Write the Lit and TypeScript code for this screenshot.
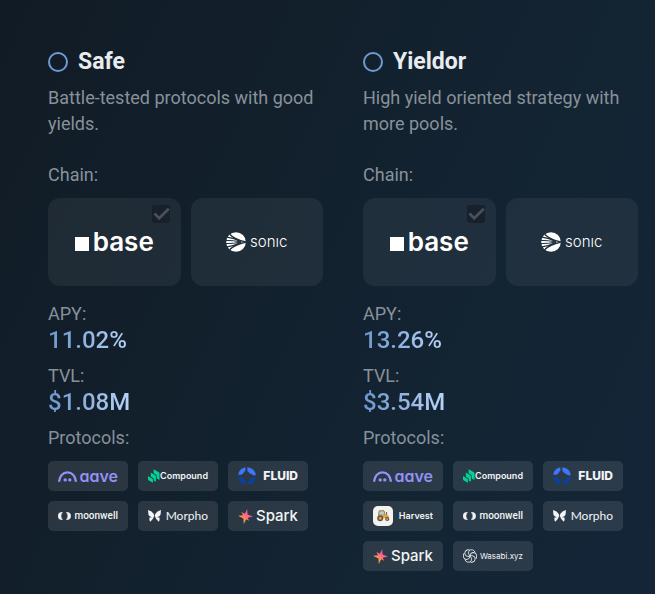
import { LitElement, html, css, svg } from "lit";
import { customElement, property } from "lit/decorators.js";

interface Strategy {
  id: string;
  name: string;
  description: string;
  apy: string;
  tvl: string;
  protocols: string[];
}

const STRATEGIES: Strategy[] = [
  {
    id: "safe",
    name: "Safe",
    description: "Battle-tested protocols with good yields.",
    apy: "11.02%",
    tvl: "$1.08M",
    protocols: ["aave", "compound", "fluid", "moonwell", "morpho", "spark"],
  },
  {
    id: "yieldor",
    name: "Yieldor",
    description: "High yield oriented strategy with more pools.",
    apy: "13.26%",
    tvl: "$3.54M",
    protocols: ["aave", "compound", "fluid", "harvest", "moonwell", "morpho", "spark", "wasabi"],
  },
];

const PROTOCOL_NAMES: Record<string, string> = {
  aave: "aave",
  compound: "Compound",
  fluid: "FLUID",
  harvest: "Harvest",
  moonwell: "moonwell",
  morpho: "Morpho",
  spark: "Spark",
  wasabi: "Wasabi.xyz",
};

const PETALS = [0, 60, 120, 180, 240, 300];

const icons: Record<string, unknown> = {
  aave: html`<svg width="19" height="11" viewBox="0 0 19 11" aria-hidden="true">
    <path d="M1.1 10.8C1.4 5.2 4.9 1.4 9.5 1.4S17.6 5.2 17.9 10.8" fill="none" stroke="#9391f7" stroke-width="2.3" />
    <circle cx="7.2" cy="8.9" r="1.7" fill="#9391f7" />
    <circle cx="11.8" cy="8.9" r="1.7" fill="#9391f7" />
  </svg>`,
  compound: html`<svg width="12" height="14" viewBox="0 0 12 14" aria-hidden="true">
    <g fill="#00d395">
      <path d="M0 7 4.4 9.7Q4.9 10 4.9 10.6V13.8L.5 11.2Q0 10.9 0 10.3Z" />
      <path d="M2.8 3.6 7.4 6.3Q7.9 6.6 7.9 7.2V12.8L5.6 11.4V9.9Q5.6 9.3 5.1 9L3.3 8Q2.8 7.7 2.8 7.1Z" />
      <path d="M5.6.2 10.9 3.2Q11.5 3.6 11.5 4.2V11L8.6 9.4V6.6Q8.6 6 8.1 5.7L6.1 4.5Q5.6 4.2 5.6 3.6Z" />
    </g>
  </svg>`,
  fluid: html`<svg width="18" height="18" viewBox="0 0 18 18" aria-hidden="true">
    <path d="M7.4.2V3.2Q6 6.2 3.4 7.8H.3A8.8 8.8 0 0 1 7.4.2Z" fill="#3f75ff" />
    <path d="M9.4.2A8.8 8.8 0 0 1 17.8 8.2H15.2Q11.4 6.8 9.4 4Z" fill="#3f75ff" />
    <path d="M.3 10H3.6Q6.2 11.6 7.4 14.4V17.8A8.8 8.8 0 0 1 .3 10Z" fill="#0b409c" />
    <path d="M17.8 10.4H15Q12 11.6 10.2 14.4V17.8A8.8 8.8 0 0 0 17.8 10.4Z" fill="#0b409c" />
  </svg>`,
  harvest: html`<svg width="20" height="20" viewBox="0 0 20 20" aria-hidden="true">
    <rect width="20" height="20" rx="5" fill="#f4f2ee" />
    <path d="M6.2 4.8h4.8l1.2 4.4H5.5Z" fill="#b9ced2" stroke="#8a6c44" stroke-width=".9" />
    <path d="M5.2 8.7h9.2q1.4.2 1.4 3.3H5.2Z" fill="#e3a23c" />
    <path d="M13.6 6v2.8" stroke="#6b5a44" />
    <circle cx="7.2" cy="12.2" r="3" fill="#5d554b" />
    <circle cx="7.2" cy="12.2" r="1.5" fill="#e3a23c" />
    <circle cx="14.2" cy="13" r="2.1" fill="#5d554b" />
    <circle cx="14.2" cy="13" r="1" fill="#e3a23c" />
  </svg>`,
  moonwell: html`<svg width="13" height="8" viewBox="0 0 13 8" aria-hidden="true">
    <path d="M4.4 0Q0 .4 0 4T4.4 8Q1.4 4 4.4 0Z" fill="#f2f4f5" stroke="#f2f4f5" stroke-width=".5" />
    <path d="M8.4 0Q12.8.4 12.8 4T8.4 8Q11.4 4 8.4 0Z" fill="#f2f4f5" stroke="#f2f4f5" stroke-width=".5" />
  </svg>`,
  morpho: html`<svg width="13" height="12" viewBox="0 0 13 12" aria-hidden="true">
    <g fill="#f2f4f5">
      <path d="M0 0Q4.2 1.2 5.6 3.7 6.3 4.8 6.2 6.6L4.4 7.2Q.4 6.6.3 3.4Z" />
      <path d="M13 0Q8.8 1.2 7.4 3.7 6.7 4.8 6.8 6.6L8.6 7.2Q12.6 6.6 12.7 3.4Z" />
      <path d="M6 6.6Q5 9.8 2.3 11.7.8 9.9 1.6 7.3 3.6 7.7 6 6.6Z" />
      <path d="M7 6.6Q8 9.8 10.7 11.7 12.2 9.9 11.4 7.3 9.4 7.7 7 6.6Z" />
    </g>
  </svg>`,
  spark: html`<svg width="15" height="15" viewBox="0 0 15 15" aria-hidden="true">
    <defs>
      <linearGradient id="spark-fill" x1="1" y1="0" x2="0" y2="1">
        <stop offset=".3" stop-color="#fa53a5" />
        <stop offset=".75" stop-color="#ffa237" />
      </linearGradient>
    </defs>
    <path
      d="M9.2 0 9.6 5.4 14.8 7.4 9.8 8.8 11 11.8 8.2 10.2 5.8 15 5.4 9.4 0 6.8 5 6.2 3.4 3 6.8 4.8Z"
      fill="url(#spark-fill)"
    />
  </svg>`,
  wasabi: html`<svg width="14" height="14" viewBox="0 0 14 14" aria-hidden="true">
    <g fill="none" stroke="#e3e7ea" stroke-width=".9">
      ${PETALS.map(
        (a) => svg`<path transform="rotate(${a} 7 7)" d="M7 7Q4.4 5 5.8 2.2 6.9.4 9.3.8 11.4 1.3 12.1 3.4" />`,
      )}
    </g>
  </svg>`,
};

const sonicIcon = html`<svg width="20" height="20" viewBox="0 0 20 20" aria-hidden="true">
  <defs>
    <mask id="sonic-cut">
      <circle cx="10" cy="10" r="9.8" fill="#fff" />
      <g fill="none" stroke="#000" stroke-width="1">
        <path d="M0 8.4Q8 8.4 14 9.8M0 11.6Q8 11.6 14 10.2" />
        <path d="M.8 5.2Q8 5.8 15 9.6M.8 14.8Q8 14.2 15 10.4" stroke-width="1.2" />
        <path d="M3.6 2.2Q8.5 7.4 20 10M3.6 17.8Q8.5 12.6 20 10" stroke-width="1.3" />
      </g>
    </mask>
  </defs>
  <rect width="20" height="20" fill="#fff" mask="url(#sonic-cut)" />
</svg>`;

@customElement("protocol-chip")
export class ProtocolChip extends LitElement {
  @property() protocol = "";

  static styles = css`
    :host {
      display: block;
    }
    .chip {
      box-sizing: border-box;
      width: 80px;
      height: 30px;
      padding: 0 10px;
      border-radius: 5px;
      background: rgba(255, 255, 255, 0.1);
      display: flex;
      align-items: center;
      justify-content: space-between;
      color: #f2f4f5;
      font-family: Inter, sans-serif;
      line-height: 20px;
      white-space: nowrap;
    }
    svg {
      display: block;
      flex: none;
    }
    .aave {
      color: #9391f7;
      font-size: 16px;
      font-weight: 600;
      font-feature-settings: "cv11";
    }
    .compound,
    .harvest {
      font-size: 9px;
      font-weight: 600;
    }
    .fluid {
      font-size: 12px;
      font-weight: 800;
    }
    .moonwell {
      font-family: Roboto, sans-serif;
      font-size: 10px;
      font-weight: 500;
    }
    .morpho {
      font-family: Lato, sans-serif;
      font-size: 12px;
    }
    .spark {
      font-size: 15px;
      font-weight: 500;
    }
    .wasabi {
      font-size: 8px;
    }
  `;

  render() {
    return html`<div class="chip">
      ${icons[this.protocol]}
      <span class=${this.protocol}>${PROTOCOL_NAMES[this.protocol]}</span>
    </div>`;
  }
}

@customElement("strategy-column")
export class StrategyColumn extends LitElement {
  @property({ attribute: false }) strategy!: Strategy;

  static styles = css`
    :host {
      display: block;
      min-width: 0;
    }
    svg {
      display: block;
      flex: none;
    }
    .title {
      display: flex;
      align-items: center;
      gap: 10px;
      height: 32px;
      margin-bottom: 7px;
      color: #e8ecef;
      font-size: 23px;
      font-weight: 700;
      line-height: 32px;
    }
    .radio {
      appearance: none;
      box-sizing: border-box;
      width: 20px;
      height: 20px;
      margin: 0;
      border: 2px solid #6f9ad3;
      border-radius: 50%;
    }
    .radio:checked {
      background: radial-gradient(#6f9ad3 45%, transparent 50%);
    }
    .text {
      margin: 0;
      color: #88919a;
      font-size: 18px;
      line-height: 26px;
    }
    .description {
      margin-bottom: 25px;
    }
    .chains {
      display: grid;
      grid-template-columns: 1fr 1fr;
      gap: 10px;
      margin: 10px 0 15px;
    }
    .chain {
      position: relative;
      display: flex;
      align-items: center;
      justify-content: center;
      height: 88px;
      border-radius: 12px;
      background: rgba(255, 255, 255, 0.06);
      color: #fff;
      font-family: Inter, sans-serif;
    }
    .base {
      display: flex;
      align-items: baseline;
      gap: 4px;
      font-size: 26px;
      font-weight: 600;
      line-height: 32px;
    }
    .sonic {
      display: flex;
      align-items: center;
      gap: 4px;
      font-size: 15px;
      font-weight: 300;
      line-height: 20px;
    }
    .check {
      position: absolute;
      top: 7px;
      right: 11px;
      width: 18px;
      height: 18px;
    }
    .check input {
      appearance: none;
      position: absolute;
      inset: 0;
      width: 18px;
      height: 18px;
      margin: 0;
      border-radius: 3px;
      background: #17202b;
    }
    .check svg {
      position: absolute;
      inset: 0;
    }
    .stats {
      margin: 0;
    }
    .value {
      width: fit-content;
      margin: 0 0 10px;
      background: linear-gradient(90deg, #6c96cd, #b9d2f7);
      background-clip: text;
      -webkit-background-clip: text;
      color: transparent;
      font-size: 24px;
      font-weight: 500;
      line-height: 26px;
    }
    .protocols {
      display: flex;
      flex-wrap: wrap;
      gap: 10px;
      margin: 10px 0 0;
      padding: 0;
      list-style: none;
    }
  `;

  render() {
    const s = this.strategy;
    return html`
      <label class="title">
        <input class="radio" type="radio" name="strategy" value=${s.id} />
        <span>${s.name}</span>
      </label>
      <p class="text description">${s.description}</p>
      <p class="text">Chain:</p>
      <div class="chains">
        <label class="chain">
          <span class="base">
            <svg width="14" height="14" viewBox="0 0 14 14" aria-hidden="true"><rect width="14" height="14" fill="#fff" /></svg>
            <span>base</span>
          </span>
          <span class="check">
            <input type="checkbox" checked disabled />
            <svg width="18" height="18" viewBox="0 0 18 18" aria-hidden="true">
              <path d="M2.5 8.5 7.2 13.2 16.8 3.8" fill="none" stroke="#48515b" stroke-width="2.8" />
            </svg>
          </span>
        </label>
        <div class="chain">
          <span class="sonic">${sonicIcon}<span>sonıc</span></span>
        </div>
      </div>
      <dl class="stats">
        <dt class="text">APY:</dt>
        <dd class="value">${s.apy}</dd>
        <dt class="text">TVL:</dt>
        <dd class="value">${s.tvl}</dd>
      </dl>
      <p class="text">Protocols:</p>
      <ul class="protocols">
        ${s.protocols.map((p) => html`<li><protocol-chip protocol=${p}></protocol-chip></li>`)}
      </ul>
    `;
  }
}

@customElement("app-root")
export class AppRoot extends LitElement {
  static styles = css`
    :host {
      display: block;
    }
    .page {
      box-sizing: border-box;
      min-height: 100vh;
      padding: 46px 17px 23px 48px;
      display: grid;
      grid-template-columns: 1fr 1fr;
      align-items: start;
      gap: 40px;
      background: linear-gradient(115deg, #111b25 0%, #12202c 35%, #132433 70%, #142538 100%);
      font-family: Roboto, sans-serif;
    }
  `;

  render() {
    return html`<main class="page">
      ${STRATEGIES.map((s) => html`<strategy-column .strategy=${s}></strategy-column>`)}
    </main>`;
  }
}
